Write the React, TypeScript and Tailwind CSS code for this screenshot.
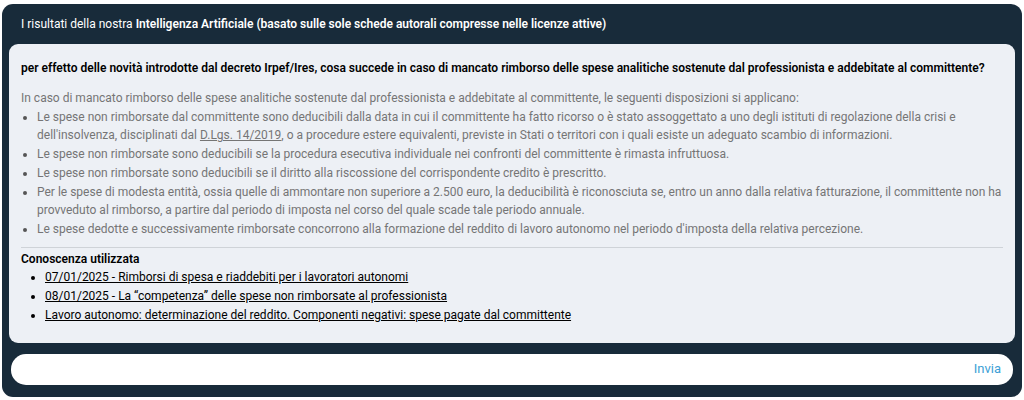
import React from 'react';

const bullets: React.ReactNode[] = [
  <>
    Le spese non rimborsate dal committente sono deducibili dalla data in cui il committente ha fatto ricorso o è stato assoggettato a uno degli istituti di regolazione della crisi e dell'insolvenza, disciplinati dal{' '}
    <span className="underline">D.Lgs. 14/2019</span>, o a procedure estere equivalenti, previste in Stati o territori con i quali esiste un adeguato scambio di informazioni.
  </>,
  <>Le spese non rimborsate sono deducibili se la procedura esecutiva individuale nei confronti del committente è rimasta infruttuosa.</>,
  <>Le spese non rimborsate sono deducibili se il diritto alla riscossione del corrispondente credito è prescritto.</>,
  <>
    Per le spese di modesta entità, ossia quelle di ammontare non superiore a 2.500 euro, la deducibilità è riconosciuta se, entro un anno dalla relativa fatturazione, il committente non ha provveduto al rimborso, a partire dal periodo di imposta nel corso del quale scade tale periodo annuale.
  </>,
  <>Le spese dedotte e successivamente rimborsate concorrono alla formazione del reddito di lavoro autonomo nel periodo d'imposta della relativa percezione.</>,
];

const sources = [
  '07/01/2025 - Rimborsi di spesa e riaddebiti per i lavoratori autonomi',
  '08/01/2025 - La “competenza” delle spese non rimborsate al professionista',
  'Lavoro autonomo: determinazione del reddito. Componenti negativi: spese pagate dal committente',
];

export default function App() {
  return (
    <div className="w-[1024px] h-[400px] bg-white pt-[4px] px-[2px] font-['Roboto',sans-serif]">
      <div className="bg-[#182b3a] rounded-[11px] pb-[12px]">
        <div className="h-[40px] flex items-center px-[19px] text-[12px] text-white">
          <span>
            I risultati della nostra <b className="font-semibold">Intelligenza Artificiale (basato sulle sole schede autorali compresse nelle licenze attive)</b>
          </span>
        </div>

        <div className="mx-[7px] bg-[#edf0f5] rounded-[9px] px-[12px] pt-[15px] pb-[18px] text-[12px]">
          <p className="font-semibold text-black leading-[18px]">
            per effetto delle novità introdotte dal decreto Irpef/Ires, cosa succede in caso di mancato rimborso delle spese analitiche sostenute dal professionista e addebitate al committente?
          </p>

          <div className="mt-[12px] text-[#757575] leading-[18.7px]">
            <p>In caso di mancato rimborso delle spese analitiche sostenute dal professionista e addebitate al committente, le seguenti disposizioni si applicano:</p>
            <ul className="list-disc pl-[16px] marker:text-[#555]">
              {bullets.map((b, i) => (
                <li key={i}>{b}</li>
              ))}
            </ul>
          </div>

          <div className="mt-[8px] border-t border-[#cfd3d8]" />

          <div className="mt-[2px] font-semibold text-black leading-[18px]">Conoscenza utilizzata</div>
          <ul className="list-disc pl-[24px] text-black leading-[19px]">
            {sources.map((s) => (
              <li key={s}>
                <a className="underline">{s}</a>
              </li>
            ))}
          </ul>
        </div>

        <div className="mx-[9px] mt-[11px] h-[31px] bg-white rounded-[15px] flex items-center justify-end pr-[12px]">
          <span className="text-[13px] text-[#3d9fd6]">Invia</span>
        </div>
      </div>
    </div>
  );
}
